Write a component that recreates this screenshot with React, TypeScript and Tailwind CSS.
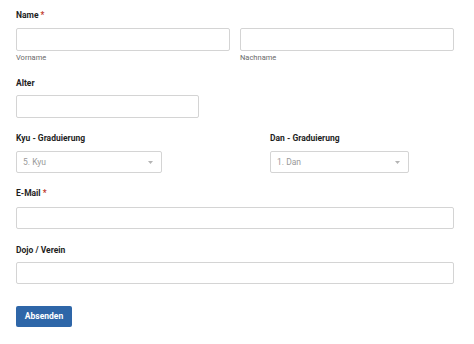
import React from "react";

const Label = ({ text, req, className = "" }: { text: string; req?: boolean; className?: string }) => (
  <div className={`text-[8.5px] leading-[14px] font-bold text-[#1e1e1e] ${className}`}>
    {text}
    {req && <span className="text-[#c0392b] ml-[2px]">*</span>}
  </div>
);

const Input = ({ className = "" }: { className?: string }) => (
  <div className={`border border-[#d4d4d4] rounded-[2px] bg-white ${className}`} />
);

const Select = ({ value, className = "" }: { value: string; className?: string }) => (
  <div className={`flex items-center justify-between border border-[#d4d4d4] rounded-[2px] bg-white pl-[6px] pr-[8px] ${className}`}>
    <span className="text-[8.5px] text-[#9a9a9a]">{value}</span>
    <svg width="5" height="3" viewBox="0 0 5 3"><path d="M0 0 L5 0 L2.5 3 Z" fill="#b4b4b4" /></svg>
  </div>
);

export default function App() {
  return (
    <div className="w-[474px] h-[344px] bg-white pl-[16px] pt-[8px]" style={{ fontFamily: "Roboto, 'Liberation Sans', sans-serif" }}>
      <Label text="Name" req />
      <div className="flex gap-[10px] mt-[6px]">
        <div className="w-[214px]">
          <Input className="h-[23px]" />
          <div className="text-[7.5px] leading-[12px] text-[#6a6a6a] mt-[1px]">Vorname</div>
        </div>
        <div className="w-[214px]">
          <Input className="h-[23px]" />
          <div className="text-[7.5px] leading-[12px] text-[#6a6a6a] mt-[1px]">Nachname</div>
        </div>
      </div>
      <Label text="Alter" className="mt-[12px]" />
      <Input className="h-[23px] w-[183px] mt-[5px]" />
      <div className="flex mt-[13px]">
        <div className="w-[254px]">
          <Label text="Kyu - Graduierung" />
          <Select value="5. Kyu" className="h-[22px] w-[146px] mt-[6px]" />
        </div>
        <div>
          <Label text="Dan - Graduierung" />
          <Select value="1. Dan" className="h-[22px] w-[139px] mt-[6px]" />
        </div>
      </div>
      <Label text="E-Mail" req className="mt-[13px]" />
      <Input className="h-[22px] w-[438px] mt-[7px]" />
      <Label text="Dojo / Verein" className="mt-[14px]" />
      <Input className="h-[22px] w-[438px] mt-[5px]" />
      <button className="mt-[22px] h-[21px] w-[56px] bg-[#2e66a8] rounded-[2px] text-white text-[8.5px] font-bold flex items-center justify-center">
        Absenden
      </button>
    </div>
  );
}
